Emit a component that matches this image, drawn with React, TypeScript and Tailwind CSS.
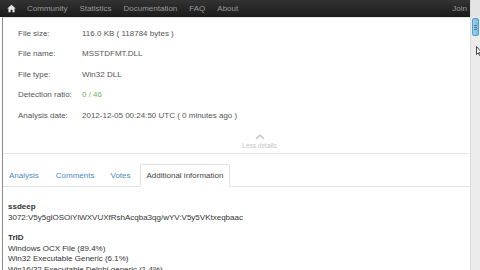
const navItems = ['Community', 'Statistics', 'Documentation', 'FAQ', 'About']

const details = [
  { label: 'File size:', value: '116.0 KB ( 118784 bytes )' },
  { label: 'File name:', value: 'MSSTDFMT.DLL' },
  { label: 'File type:', value: 'Win32 DLL' },
  { label: 'Detection ratio:', value: '0 / 46', green: true },
  { label: 'Analysis date:', value: '2012-12-05 00:24:50 UTC ( 0 minutes ago )' },
]

const tabs = ['Analysis', 'Comments', 'Votes']

function HomeIcon() {
  return (
    <svg width="9" height="9" viewBox="0 0 10 10" className="fill-[#e5e5e5]">
      <path d="M5 0.8 L0.3 5 L1.6 5 L1.6 9.2 L4 9.2 L4 6.4 L6 6.4 L6 9.2 L8.4 9.2 L8.4 5 L9.7 5 Z" />
    </svg>
  )
}

export default function App() {
  return (
    <div className="flex h-[270px] w-[480px] overflow-hidden bg-white font-['Liberation_Sans',Arial,sans-serif] text-[8px] text-[#555]">
      <div className="flex w-[470px] flex-col">
        {/* Top navbar */}
        <div className="flex h-[17px] shrink-0 items-center bg-gradient-to-b from-[#333] to-[#1b1b1b] pl-[7px] pr-[3px] text-[#9a9a9a]">
          <HomeIcon />
          <div className="ml-[11px] flex gap-[12px]">
            {navItems.map((item) => (
              <span key={item}>{item}</span>
            ))}
          </div>
          <span className="ml-auto">Join</span>
        </div>

        <div className="ml-[2px] flex flex-1 flex-col border-l border-t border-[#8a8a8a] border-t-[#e2e2e2]">
          {/* File details */}
          <div className="flex flex-col gap-[11px] pl-[15px] pt-[11px]">
            {details.map((d) => (
              <div key={d.label} className="flex h-[9.5px] items-center">
                <span className="w-[64px]">{d.label}</span>
                <span className={d.green ? 'text-[#6fb45a]' : ''}>{d.value}</span>
              </div>
            ))}
          </div>

          <div className="mt-[13px] flex flex-col items-center pl-[46px] text-[6.5px] text-[#c4c4c4]">
            <svg width="10" height="6" viewBox="0 0 10 6" className="stroke-[#c8c8c8]" fill="none" strokeWidth="1.6">
              <path d="M1 5 L5 1.2 L9 5" />
            </svg>
            <span className="mt-[1px]">Less details</span>
          </div>

          <div className="mt-[3px] h-px bg-[#e6e6e6]" />

          {/* Tabs */}
          <div className="mt-[10px] flex items-end border-b border-[#e2e2e2] pl-[5px] leading-[10px]">
            <span className="mr-[17px] pb-[5px] pl-[1px] text-[#4d8ac4]">{tabs[0]}</span>
            <span className="mr-[16px] pb-[5px] text-[#4d8ac4]">{tabs[1]}</span>
            <span className="mr-[9px] pb-[5px] text-[#4d8ac4]">{tabs[2]}</span>
            <span className="-mb-px rounded-t-[2px] border border-[#e2e2e2] border-b-white bg-white px-[6px] pb-[5px] pt-[6px] text-[#444]">
              Additional information
            </span>
          </div>

          {/* Additional information */}
          <div className="flex flex-col pl-[5px] pt-[15px] leading-[10.5px] text-[#333]">
            <span className="font-bold">ssdeep</span>
            <span>3072:V5y5glOSOiYlWXVUXfRshAcqba3qg/wYV:V5y5VKtxeqbaac</span>
            <span className="mt-[10px] font-bold">TrID</span>
            <span>Windows OCX File (89.4%)</span>
            <span>Win32 Executable Generic (6.1%)</span>
            <span>Win16/32 Executable Delphi generic (1.4%)</span>
          </div>
        </div>
      </div>

      {/* Scrollbar */}
      <div className="relative flex w-[10px] flex-col border-l border-[#dcdcdc] bg-[#ececec]">
        <div className="h-[17px] bg-[#e4e4e4]" />
        <div className="mx-[1px] mt-[1px] flex h-[18px] items-center justify-center rounded-[2px] border border-[#5a9ac6] bg-gradient-to-r from-[#9fd0ee] to-[#7ab9e2]">
          <div className="flex flex-col gap-px">
            <div className="h-px w-[3px] bg-[#3f7ba3]" />
            <div className="h-px w-[3px] bg-[#3f7ba3]" />
            <div className="h-px w-[3px] bg-[#3f7ba3]" />
          </div>
        </div>
        <svg className="absolute left-[5px] top-[46px]" width="6" height="10" viewBox="0 0 6 10">
          <path d="M0.5 0.5 L0.5 8.5 L2.3 6.8 L3.6 9.5 L4.6 9 L3.4 6.4 L5.6 6.4 Z" fill="white" stroke="black" strokeWidth="0.7" />
        </svg>
      </div>
    </div>
  )
}
